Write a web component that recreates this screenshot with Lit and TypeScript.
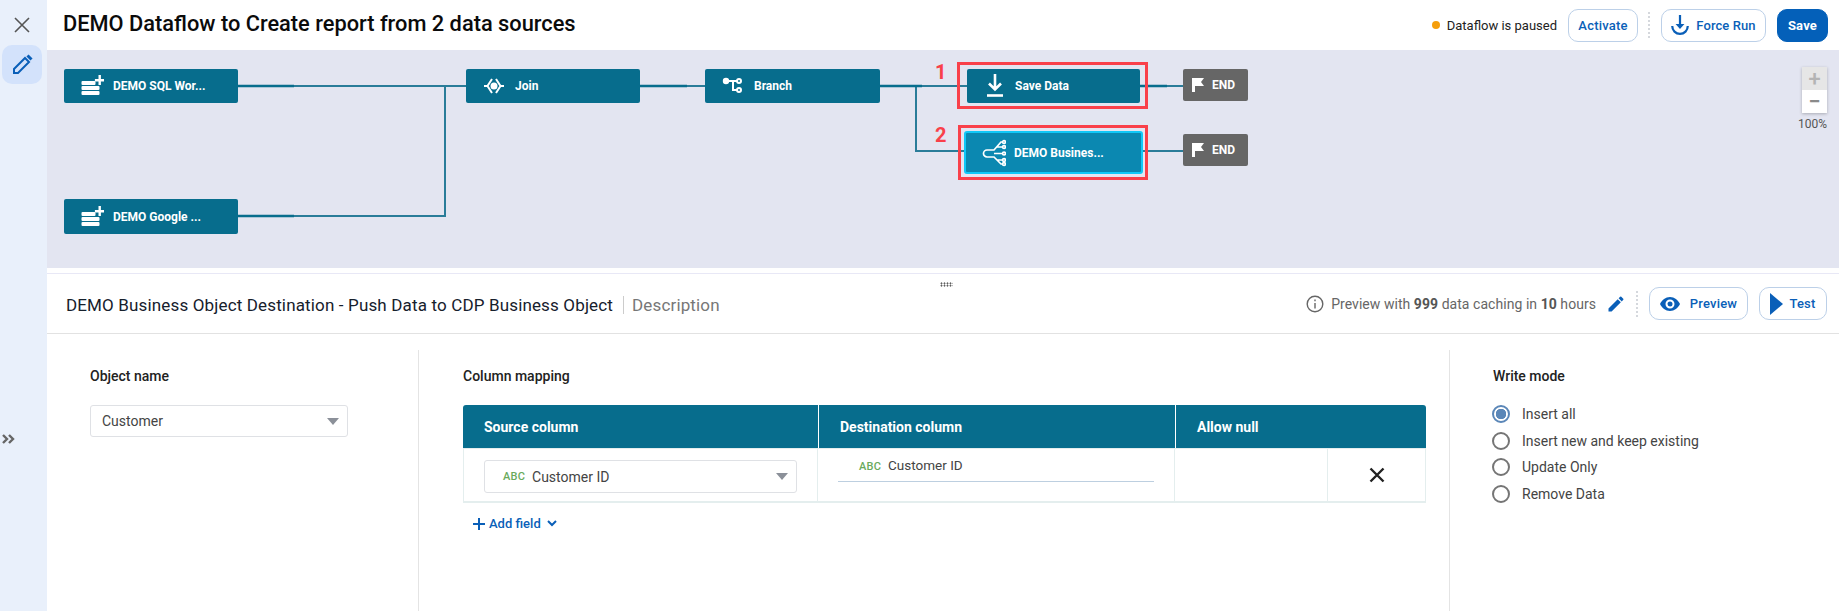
import { LitElement, html, css, svg } from "lit";
import { customElement } from "lit/decorators.js";

const icons: Record<string, unknown> = {
  source: svg`<g transform="translate(1.500 0)" fill="currentColor"><rect x="0" y="7" width="14" height="4" rx="1"/><rect x="0" y="12" width="18" height="4" rx="1"/><rect x="0" y="17" width="18" height="4" rx="1"/><path d="M17 1h2.400v4H23v2.400h-3.600V11H17V7.400h-3.600V5H17z"/></g>`,
  join: svg`<g transform="translate(2 2)" fill="none" stroke="currentColor" stroke-width="2"><path d="M8 3 3.500 10 8 17M12 3l4.500 7L12 17"/><circle cx="10" cy="10" r="2.500" fill="currentColor"/><path d="M0 10h3M17 10h3"/></g>`,
  branch: svg`<g transform="translate(2 3)" fill="none" stroke="currentColor" stroke-width="2"><circle cx="3" cy="4" r="2.200" fill="currentColor"/><path d="M5 4h9M10 4v9h4"/><circle cx="16" cy="4" r="2"/><circle cx="16" cy="13" r="2"/></g>`,
  save: svg`<g fill="none" stroke="currentColor" stroke-width="2.600"><path d="M12 0v15M6 9.500l6 6 6-6"/><path d="M4 21.500h16"/></g>`,
  fan: svg`<g fill="none" stroke="currentColor" stroke-width="1.700"><path d="M23 3h-2l-7 8H7a3.500 3.500 0 0 0 0 7h7l7 7h2M14 14.500h9M17 8h5M17 21h5"/><circle cx="24" cy="3" r="1.400"/><circle cx="24" cy="8" r="1.400"/><circle cx="24" cy="14.500" r="1.400"/><circle cx="24" cy="21" r="1.400"/><circle cx="24" cy="25" r="1.400"/></g>`,
};

const nodes = [
  { x: 64, y: 69, w: 174, h: 34, label: "DEMO SQL Wor...", icon: "source" },
  { x: 64, y: 199, w: 174, h: 35, label: "DEMO Google ...", icon: "source" },
  { x: 466, y: 69, w: 174, h: 34, label: "Join", icon: "join" },
  { x: 705, y: 69, w: 175, h: 34, label: "Branch", icon: "branch" },
  { x: 967, y: 69, w: 173, h: 34, label: "Save Data", icon: "save" },
];

const radios = [
  { label: "Insert all", on: true },
  { label: "Insert new and keep existing", on: false },
  { label: "Update Only", on: false },
  { label: "Remove Data", on: false },
];

@customElement("app-root")
export class AppRoot extends LitElement {
  static styles = css`
    :host {
      display: flex;
      width: 1839px;
      height: 611px;
      overflow: hidden;
      background: #fff;
      font-family: Roboto, "Liberation Sans", sans-serif;
      color: #222;
    }
    svg { display: block; }

    .rail {
      width: 47px;
      flex: none;
      box-sizing: border-box;
      padding-right: 4px;
      background: #e9f0fb;
      display: flex;
      flex-direction: column;
      align-items: center;
      position: relative;
    }
    .rail-close { margin-top: 17px; color: #555; }
    .rail-edit {
      margin-top: 12px;
      width: 40px;
      height: 39px;
      border-radius: 10px;
      background: #d3e2fb;
      color: #0a5fb8;
      display: flex;
      align-items: center;
      justify-content: center;
    }
    .rail-more {
      position: absolute;
      left: 1px;
      top: 433px;
      color: #666;
    }

    .main { flex: 1; min-width: 0; display: flex; flex-direction: column; }

    .top {
      height: 50px;
      flex: none;
      display: flex;
      align-items: center;
      padding: 0 11px 0 16px;
      box-sizing: border-box;
    }
    .title { font-size: 21.800px; font-weight: 500; color: #0b0b0b; flex: 1; margin-top: -4px; }
    .status { display: flex; align-items: center; gap: 7px; font-size: 13px; color: #222; margin-right: 11px; }
    .dot { width: 8px; height: 8px; border-radius: 50%; background: #f59e0b; }
    .btn {
      height: 33px;
      box-sizing: border-box;
      border: 1px solid #bcd0e8;
      border-radius: 10px;
      background: #fff;
      color: #0a5fb8;
      font-size: 13px;
      font-weight: 500;
      display: flex;
      align-items: center;
      justify-content: center;
      gap: 8px;
      letter-spacing: 0.2px;
    }
    .activate { width: 70px; }
    .force { width: 105px; gap: 7px; letter-spacing: 0.1px; }
    .preview { width: 99px; gap: 10px; }
    .test { width: 68px; gap: 6px; }
    .save { width: 51px; margin-left: 11px; background: #0460b9; border-color: #0460b9; color: #fff; font-weight: 700; }
    .sep { width: 0; height: 26px; border-left: 2px dotted #d5d8dd; margin: 0 11px 0 10px; }

    .canvas {
      position: relative;
      height: 218px;
      flex: none;
      background: #e3e5f1;
    }
    .links { position: absolute; left: 0; top: 0; }
    .node {
      position: absolute;
      box-sizing: border-box;
      border-radius: 2px;
      background: #076d8d;
      color: #fff;
      font-size: 12px;
      font-weight: 700;
      display: flex;
      align-items: center;
    }
    .node-icon { margin: 0 9px 0 16px; flex: none; }
    .node-save .node-icon { margin-right: 8px; }
    .selected {
      left: 917px;
      top: 81px;
      width: 179px;
      height: 43px;
      background: #0b88b1;
      border: 2px solid #10c8f8;
      border-radius: 3px;
    }
    .selected .node-icon { margin: 0 8px 0 14px; }
    .end {
      position: absolute;
      left: 1136px;
      width: 65px;
      height: 32px;
      border-radius: 2px;
      background: #666;
      color: #fff;
      font-size: 12px;
      font-weight: 700;
      display: flex;
      align-items: center;
      gap: 7px;
      padding-left: 9px;
      box-sizing: border-box;
    }
    .mark { position: absolute; border: 3px solid #f9404a; box-sizing: border-box; }
    .num { position: absolute; color: #f9404a; font-size: 20px; font-weight: 700; line-height: 20px; }
    .zoom {
      position: absolute;
      left: 1755px;
      top: 17px;
      width: 25px;
      box-shadow: 0 1px 3px rgba(0, 0, 0, 0.25);
      background: #fff;
    }
    .zoom div {
      height: 23px;
      display: flex;
      align-items: center;
      justify-content: center;
      color: #8a8a8a;
      font-size: 22px;
      font-weight: 500;
    }
    .zoom .off { background: #e6e6e6; color: #b4b4b4; }
    .pct { position: absolute; left: 1751px; top: 67px; font-size: 12px; color: #555; }

    .gap { height: 5px; flex: none; border-bottom: 1px solid #e8e8f6; position: relative; }
    .grip {
      position: absolute;
      left: 893px;
      top: 14px;
      width: 13px;
      height: 5px;
      background-image: radial-gradient(#444 0.9px, transparent 1.100px);
      background-size: 3px 2.500px;
    }

    .sub {
      height: 60px;
      flex: none;
      box-sizing: border-box;
      border-bottom: 1px solid #e2e2e2;
      display: flex;
      align-items: center;
      padding: 0 12px 0 19px;
    }
    .sub-title {
      font-size: 17px;
      color: #16202c;
      letter-spacing: 0.15px;
      padding-right: 10px;
      border-right: 1px solid #ccc;
      line-height: 18px;
      margin-top: 3px;
    }
    .sub-desc { font-size: 17px; color: #777; margin: 3px 0 0 8px; flex: 1; letter-spacing: 0.15px; }
    .cache { display: flex; align-items: center; font-size: 14px; color: #666; gap: 7px; margin-right: 10px; letter-spacing: 0.05px; }
    .cache b { color: #555; font-weight: 700; }
    .edit-cache { color: #0a5fb8; margin-right: 10px; }
    .sub .sep { margin: 0 11px 0 0; }
    .sub .test { margin-left: 11px; }

    .body { flex: 1; display: flex; min-height: 0; padding-top: 16px; }
    .col { box-sizing: border-box; padding-top: 18px; }
    .col + .col { border-left: 1px solid #e4e4e4; }
    .col-object { width: 371px; padding-left: 43px; }
    .col-map { width: 1031px; padding-left: 44px; }
    .col-write { flex: 1; padding-left: 43px; }
    .label { font-size: 14px; font-weight: 500; color: #222; line-height: 16px; margin-bottom: 21px; }

    .select {
      box-sizing: border-box;
      height: 32px;
      border: 1px solid #dfe1e5;
      border-radius: 3px;
      display: flex;
      align-items: center;
      font-size: 14px;
      color: #444;
      background: #fff;
    }
    .select::after {
      content: "";
      margin-left: auto;
      border-left: 6px solid transparent;
      border-right: 6px solid transparent;
      border-top: 7px solid #8b9099;
    }
    .object-select { width: 258px; padding: 0 8px 0 11px; }

    .grid {
      width: 963px;
      display: grid;
      grid-template-columns: 355px 357px 153px 98px;
    }
    .th {
      height: 43px;
      background: #076d8d;
      color: #fff;
      font-size: 14px;
      font-weight: 700;
      display: flex;
      align-items: center;
      padding-left: 21px;
      box-sizing: border-box;
    }
    .th + .th { border-left: 1px solid #fff; }
    .th.first { border-top-left-radius: 3px; }
    .th.last { grid-column: span 2; border-top-right-radius: 3px; }
    .td {
      height: 55px;
      box-sizing: border-box;
      border-right: 1px solid #e4eeee;
      border-bottom: 2px solid #e4eeee;
      border-top: 1px solid #e4eeee;
      display: flex;
      align-items: center;
    }
    .td.first { border-left: 1px solid #e4eeee; padding: 0 20px; }
    .abc { font-size: 11px; font-weight: 500; letter-spacing: 0.2px; color: #6aaa5c; margin-right: 7px; }
    .row-select { width: 100%; padding: 0 8px 0 18px; height: 33px; font-size: 14px; margin-top: 3px; }
    .dest { align-items: flex-start; padding: 0 20px; }
    .dest-field {
      width: 100%;
      height: 33px;
      border-bottom: 1px solid #bdcfe0;
      font-size: 13.500px;
      color: #444;
      padding: 8px 0 0 21px;
      box-sizing: border-box;
    }
    .remove { justify-content: center; }
    .add {
      display: flex;
      align-items: center;
      gap: 4px;
      margin: 13px 0 0 10px;
      color: #0a5fb8;
      font-size: 13px;
      font-weight: 500;
    }

    .radios { display: flex; flex-direction: column; gap: 8.700px; margin-left: -1px; }
    .radio { display: flex; align-items: center; gap: 12px; font-size: 14px; color: #444; height: 18px; }
    .circle { width: 18px; height: 18px; box-sizing: border-box; border: 2px solid #757575; border-radius: 50%; }
    .circle.on { border-color: #5b87b8; background: radial-gradient(circle, #5b87b8 0 5px, #fff 5.500px); }
  `;

  private pencil(size: number) {
    return html`<svg width=${size} height=${size} viewBox="0 0 24 24" fill="currentColor"><path d="M3 17.250V21h3.750L17.810 9.940l-3.750-3.750L3 17.250zM20.710 7.040a1 1 0 0 0 0-1.410l-2.340-2.340a1 1 0 0 0-1.410 0l-1.830 1.830 3.750 3.750 1.830-1.830z"/></svg>`;
  }

  private renderLinks() {
    return html`<svg class="links" width="1792" height="218" fill="none" stroke-width="2">
      <path stroke="#2a7c99" d="M191 36H466M191 166H398V36M593 36H705M833 36H967M869 36V101H917M1093 36H1137M1096 101H1137" />
      <path stroke="#076d8d" stroke-width="2.500" d="M191 36H247M191 166H247M593 36H640M833 36H875M1093 36H1120" />
    </svg>`;
  }

  private renderCanvas() {
    return html`<div class="canvas">
      ${this.renderLinks()}
      ${nodes.map(
        (n) => html`<div class="node node-${n.icon}" style="left:${n.x - 47}px;top:${n.y - 50}px;width:${n.w}px;height:${n.h}px">
          <svg class="node-icon" width="24" height="24" viewBox="0 0 24 24">${icons[n.icon]}</svg>
          ${n.label}
        </div>`
      )}
      <div class="node selected">
        <svg class="node-icon" width="26" height="28" viewBox="0 0 26 28">${icons.fan}</svg>
        DEMO Busines...
      </div>
      ${[19, 84].map(
        (y) => html`<div class="end" style="top:${y}px">
          <svg width="13" height="14" viewBox="0 0 13 14" fill="currentColor"><path d="M0 0h12l-3 4 3 4H3v6H0z"/></svg>END
        </div>`
      )}
      <div class="mark" style="left:910px;top:12px;width:191px;height:47px"></div>
      <div class="mark" style="left:911px;top:75px;width:190px;height:55px"></div>
      <span class="num" style="left:888px;top:12px">1</span>
      <span class="num" style="left:888px;top:75px">2</span>
      <div class="zoom"><div class="off">+</div><div>−</div></div>
      <span class="pct">100%</span>
    </div>`;
  }

  render() {
    return html`
      <nav class="rail">
        <svg class="rail-close" width="16" height="16" viewBox="0 0 16 16" fill="none" stroke="currentColor" stroke-width="1.600"><path d="M1 1l14 14M15 1 1 15"/></svg>
        <div class="rail-edit">
          <svg width="24" height="24" viewBox="0 0 24 24" fill="none" stroke="currentColor" stroke-width="2"><path d="M4 20v-4L15 5l4 4L8 20z"/><path d="M17.500 2.500l4 4" stroke-width="3"/></svg>
        </div>
        <svg class="rail-more" width="14" height="12" viewBox="0 0 14 12" fill="none" stroke="currentColor" stroke-width="2.400"><path d="M2 2l4 4-4 4M8 2l4 4-4 4"/></svg>
      </nav>
      <div class="main">
        <header class="top">
          <div class="title">DEMO Dataflow to Create report from 2 data sources</div>
          <div class="status"><span class="dot"></span>Dataflow is paused</div>
          <div class="btn activate">Activate</div>
          <div class="sep"></div>
          <div class="btn force">
            <svg width="18" height="20" viewBox="0 0 16 18" fill="currentColor"><path d="M7 0h2v8h3l-4 4.500L4 8h3z"/><path d="M0 10h2a6 6 0 0 0 12 0h2a8 8 0 0 1-16 0z"/></svg>
            Force Run
          </div>
          <div class="btn save">Save</div>
        </header>
        ${this.renderCanvas()}
        <div class="gap"><span class="grip"></span></div>
        <div class="sub">
          <div class="sub-title">DEMO Business Object Destination - Push Data to CDP Business Object</div>
          <div class="sub-desc">Description</div>
          <div class="cache">
            <svg width="18" height="18" viewBox="0 0 18 18" fill="none" stroke="#666" stroke-width="1.400"><circle cx="9" cy="9" r="7.800"/><path d="M9 8v5.500M9 4.500v1.800"/></svg>
            <span>Preview with <b>999</b> data caching in <b>10</b> hours</span>
          </div>
          <span class="edit-cache">${this.pencil(20)}</span>
          <div class="sep"></div>
          <div class="btn preview">
            <svg width="20" height="14" viewBox="0 0 20 14" fill="currentColor"><path fill-rule="evenodd" d="M10 0c4.500 0 8 3 10 7-2 4-5.500 7-10 7S2 11 0 7c2-4 5.500-7 10-7zm0 2.500a4.500 4.500 0 1 0 0 9 4.500 4.500 0 0 0 0-9zm0 2a2.500 2.500 0 1 1 0 5 2.500 2.500 0 0 1 0-5z"/></svg>
            Preview
          </div>
          <div class="btn test">
            <svg width="13" height="22" viewBox="0 0 13 22" fill="currentColor"><path d="M0 0l13 11L0 22z"/></svg>
            Test
          </div>
        </div>
        <div class="body">
          <section class="col col-object">
            <div class="label">Object name</div>
            <div class="select object-select">Customer</div>
          </section>
          <section class="col col-map">
            <div class="label">Column mapping</div>
            <div class="grid">
              <div class="th first">Source column</div>
              <div class="th">Destination column</div>
              <div class="th last">Allow null</div>
              <div class="td first"><div class="select row-select"><span class="abc">ABC</span>Customer ID</div></div>
              <div class="td dest"><div class="dest-field"><span class="abc">ABC</span>Customer ID</div></div>
              <div class="td"></div>
              <div class="td remove">
                <svg width="16" height="16" viewBox="0 0 16 16" fill="none" stroke="#222" stroke-width="2.400"><path d="M1.500 1.500l13 13M14.500 1.500l-13 13"/></svg>
              </div>
            </div>
            <div class="add">
              <svg width="12" height="12" viewBox="0 0 12 12" fill="currentColor"><path d="M5 0h2v5h5v2H7v5H5V7H0V5h5z"/></svg>
              Add field
              <svg width="10" height="7" viewBox="0 0 10 7" fill="none" stroke="currentColor" stroke-width="2" style="margin-left:2px"><path d="M1 1l4 4 4-4"/></svg>
            </div>
          </section>
          <section class="col col-write">
            <div class="label">Write mode</div>
            <div class="radios">
              ${radios.map(
                (r) => html`<div class="radio"><span class="circle ${r.on ? "on" : ""}"></span>${r.label}</div>`
              )}
            </div>
          </section>
        </div>
      </div>
    `;
  }
}
